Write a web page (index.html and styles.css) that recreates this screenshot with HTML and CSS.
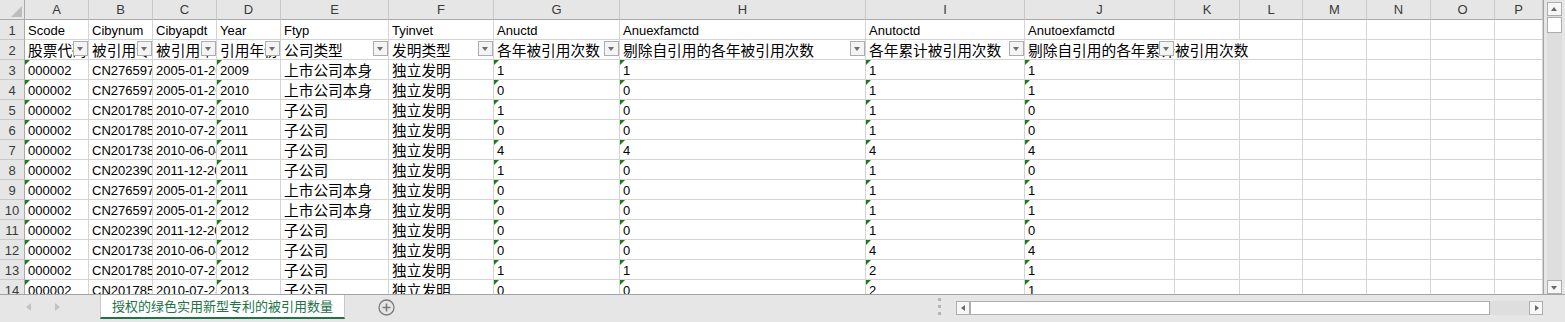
FILE: index.html
```html
<!DOCTYPE html>
<html lang="zh-CN">
<head>
    <meta charset="UTF-8">
    <title>授权的绿色实用新型专利的被引用数量</title>
    <link rel="stylesheet" href="styles.css">
</head>
<body>

    <div class="main">
        <div class="sheet">
            <div class="row hd">
                <div class="corner"><svg width="11" height="11" viewBox="0 0 11 11"><polygon points="11,0 11,11 0,11" fill="#bdbdbd"/></svg></div>
                <div class="h">A</div><div class="h">B</div><div class="h">C</div><div class="h">D</div>
                <div class="h">E</div><div class="h">F</div><div class="h">G</div><div class="h">H</div>
                <div class="h">I</div><div class="h">J</div><div class="h">K</div><div class="h">L</div>
                <div class="h">M</div><div class="h">N</div><div class="h">O</div><div class="h">P</div>
            </div>
            <div class="row">
                <div class="rh">1</div>
                <div class="c">Scode</div><div class="c">Cibynum</div><div class="c">Cibyapdt</div><div class="c">Year</div>
                <div class="c">Ftyp</div><div class="c">Tyinvet</div><div class="c">Anuctd</div><div class="c">Anuexfamctd</div>
                <div class="c">Anutoctd</div><div class="c">Anutoexfamctd</div>
                <div class="c"></div><div class="c"></div><div class="c"></div><div class="c"></div><div class="c"></div><div class="c"></div>
            </div>
            <div class="row">
                <div class="rh">2</div>
                <div class="c z">股票代码<span class="fb"></span></div>
                <div class="c z">被引用专利号<span class="fb"></span></div>
                <div class="c z">被引用申请日<span class="fb"></span></div>
                <div class="c z">引用年份<span class="fb"></span></div>
                <div class="c z">公司类型<span class="fb"></span></div>
                <div class="c z">发明类型<span class="fb"></span></div>
                <div class="c z">各年被引用次数<span class="fb"></span></div>
                <div class="c z">剔除自引用的各年被引用次数<span class="fb"></span></div>
                <div class="c z">各年累计被引用次数<span class="fb"></span></div>
                <div class="c z spill">剔除自引用的各年累计被引用次数<span class="fb"></span></div>
                <div class="c spill"></div>
                <div class="c"></div><div class="c"></div><div class="c"></div><div class="c"></div><div class="c"></div>
            </div>
            <div class="row">
                <div class="rh">3</div>
                <div class="c t">000002</div><div class="c">CN2765979</div><div class="c">2005-01-26</div><div class="c t">2009</div>
                <div class="c z">上市公司本身</div><div class="c z">独立发明</div>
                <div class="c t">1</div><div class="c t">1</div><div class="c t">1</div><div class="c t">1</div>
                <div class="c"></div><div class="c"></div><div class="c"></div><div class="c"></div><div class="c"></div><div class="c"></div>
            </div>
            <div class="row">
                <div class="rh">4</div>
                <div class="c t">000002</div><div class="c">CN2765979</div><div class="c">2005-01-26</div><div class="c t">2010</div>
                <div class="c z">上市公司本身</div><div class="c z">独立发明</div>
                <div class="c t">0</div><div class="c t">0</div><div class="c t">1</div><div class="c t">1</div>
                <div class="c"></div><div class="c"></div><div class="c"></div><div class="c"></div><div class="c"></div><div class="c"></div>
            </div>
            <div class="row">
                <div class="rh">5</div>
                <div class="c t">000002</div><div class="c">CN2017854</div><div class="c">2010-07-28</div><div class="c t">2010</div>
                <div class="c z">子公司</div><div class="c z">独立发明</div>
                <div class="c t">1</div><div class="c t">0</div><div class="c t">1</div><div class="c t">0</div>
                <div class="c"></div><div class="c"></div><div class="c"></div><div class="c"></div><div class="c"></div><div class="c"></div>
            </div>
            <div class="row">
                <div class="rh">6</div>
                <div class="c t">000002</div><div class="c">CN2017854</div><div class="c">2010-07-28</div><div class="c t">2011</div>
                <div class="c z">子公司</div><div class="c z">独立发明</div>
                <div class="c t">0</div><div class="c t">0</div><div class="c t">1</div><div class="c t">0</div>
                <div class="c"></div><div class="c"></div><div class="c"></div><div class="c"></div><div class="c"></div><div class="c"></div>
            </div>
            <div class="row">
                <div class="rh">7</div>
                <div class="c t">000002</div><div class="c">CN2017386</div><div class="c">2010-06-04</div><div class="c t">2011</div>
                <div class="c z">子公司</div><div class="c z">独立发明</div>
                <div class="c t">4</div><div class="c t">4</div><div class="c t">4</div><div class="c t">4</div>
                <div class="c"></div><div class="c"></div><div class="c"></div><div class="c"></div><div class="c"></div><div class="c"></div>
            </div>
            <div class="row">
                <div class="rh">8</div>
                <div class="c t">000002</div><div class="c">CN2023909</div><div class="c">2011-12-20</div><div class="c t">2011</div>
                <div class="c z">子公司</div><div class="c z">独立发明</div>
                <div class="c t">1</div><div class="c t">0</div><div class="c t">1</div><div class="c t">0</div>
                <div class="c"></div><div class="c"></div><div class="c"></div><div class="c"></div><div class="c"></div><div class="c"></div>
            </div>
            <div class="row">
                <div class="rh">9</div>
                <div class="c t">000002</div><div class="c">CN2765979</div><div class="c">2005-01-26</div><div class="c t">2011</div>
                <div class="c z">上市公司本身</div><div class="c z">独立发明</div>
                <div class="c t">0</div><div class="c t">0</div><div class="c t">1</div><div class="c t">1</div>
                <div class="c"></div><div class="c"></div><div class="c"></div><div class="c"></div><div class="c"></div><div class="c"></div>
            </div>
            <div class="row">
                <div class="rh">10</div>
                <div class="c t">000002</div><div class="c">CN2765979</div><div class="c">2005-01-26</div><div class="c t">2012</div>
                <div class="c z">上市公司本身</div><div class="c z">独立发明</div>
                <div class="c t">0</div><div class="c t">0</div><div class="c t">1</div><div class="c t">1</div>
                <div class="c"></div><div class="c"></div><div class="c"></div><div class="c"></div><div class="c"></div><div class="c"></div>
            </div>
            <div class="row">
                <div class="rh">11</div>
                <div class="c t">000002</div><div class="c">CN2023909</div><div class="c">2011-12-20</div><div class="c t">2012</div>
                <div class="c z">子公司</div><div class="c z">独立发明</div>
                <div class="c t">0</div><div class="c t">0</div><div class="c t">1</div><div class="c t">0</div>
                <div class="c"></div><div class="c"></div><div class="c"></div><div class="c"></div><div class="c"></div><div class="c"></div>
            </div>
            <div class="row">
                <div class="rh">12</div>
                <div class="c t">000002</div><div class="c">CN2017386</div><div class="c">2010-06-04</div><div class="c t">2012</div>
                <div class="c z">子公司</div><div class="c z">独立发明</div>
                <div class="c t">0</div><div class="c t">0</div><div class="c t">4</div><div class="c t">4</div>
                <div class="c"></div><div class="c"></div><div class="c"></div><div class="c"></div><div class="c"></div><div class="c"></div>
            </div>
            <div class="row">
                <div class="rh">13</div>
                <div class="c t">000002</div><div class="c">CN2017854</div><div class="c">2010-07-28</div><div class="c t">2012</div>
                <div class="c z">子公司</div><div class="c z">独立发明</div>
                <div class="c t">1</div><div class="c t">1</div><div class="c t">2</div><div class="c t">1</div>
                <div class="c"></div><div class="c"></div><div class="c"></div><div class="c"></div><div class="c"></div><div class="c"></div>
            </div>
            <div class="row">
                <div class="rh">14</div>
                <div class="c t">000002</div><div class="c">CN2017854</div><div class="c">2010-07-28</div><div class="c t">2013</div>
                <div class="c z">子公司</div><div class="c z">独立发明</div>
                <div class="c t">0</div><div class="c t">0</div><div class="c t">2</div><div class="c t">1</div>
                <div class="c"></div><div class="c"></div><div class="c"></div><div class="c"></div><div class="c"></div><div class="c"></div>
            </div>
        </div>

        <div class="vscroll">
            <div class="vbar">
                <div class="sbtn up"></div>
                <div class="vthumb"></div>
                <div class="vtrack"></div>
                <div class="sbtn down"></div>
            </div>
        </div>
    </div>

    <div class="tabbar">
        <div class="nav">
            <svg width="5" height="8" viewBox="0 0 5 8"><polygon points="5,0 5,8 0,4" fill="#c2c2c2"/></svg>
            <svg width="5" height="8" viewBox="0 0 5 8"><polygon points="0,0 0,8 5,4" fill="#c2c2c2"/></svg>
        </div>
        <div class="tab">授权的绿色实用新型专利的被引用数量</div>
        <div class="add">
            <svg width="17" height="17" viewBox="0 0 17 17">
                <circle cx="8.5" cy="8.5" r="7.5" fill="none" stroke="#7a7a7a" stroke-width="1.3"/>
                <path d="M8.5 4.5v8M4.5 8.5h8" stroke="#7a7a7a" stroke-width="1.6"/>
            </svg>
        </div>
        <div class="spacer"></div>
        <div class="dots"><i></i><i></i><i></i></div>
        <div class="hscroll">
            <div class="hbtn left"></div>
            <div class="hthumb"></div>
            <div class="htrack"></div>
            <div class="hbtn right"></div>
        </div>
    </div>

</body>
</html>
```

FILE: styles.css
```css
*{
    box-sizing: border-box;
}
html, body{
    margin: 0;
    padding: 0;
    width: 1565px;
    height: 322px;
    overflow: hidden;
}
body{
    font-family: 'Liberation Sans', Arial, sans-serif;
    font-size: 13px;
    color: #000;
    background-color: #e6e6e6;
}

.main{
    display: flex;
    height: 294px;
}

/* grid */
.sheet{
    width: 1544px;
    height: 294px;
    overflow: hidden;
    background: #fff;
    border-right: 1px solid #a3a3a3;
}
.row{
    display: grid;
    grid-template-columns: 25px 64px 64px 64px 64px 108px 105px 126px 246px 159px 150px 65px 63px 64px 64px 64px 48px;
    height: 20px;
}
.c{
    position: relative;
    padding: 2px 2px 0 3px;
    line-height: 17px;
    white-space: nowrap;
    overflow: hidden;
    border-right: 1px solid #d4d4d4;
    border-bottom: 1px solid #d4d4d4;
}
.c.z{
    font-family: 'Noto Sans CJK SC', sans-serif;
    font-size: 14.7px;
    padding-top: 1px;
}
.c.spill{
    overflow: visible;
    border-right-color: transparent;
}
.c.t::before{
    content: '';
    position: absolute;
    left: 0;
    top: 0;
    border-top: 5px solid #1a7d1a;
    border-right: 5px solid transparent;
}

/* filter button */
.fb{
    position: absolute;
    right: 0;
    top: 1px;
    width: 15px;
    height: 15px;
    background: #f4f4f4;
    border: 1px solid #adadad;
    z-index: 1;
}
.fb::after{
    content: '';
    position: absolute;
    left: 3px;
    top: 5px;
    border-top: 4px solid #6e6e6e;
    border-left: 3.5px solid transparent;
    border-right: 3.5px solid transparent;
}

/* headers */
.hd .h, .hd .corner{
    background: #e6e6e6;
    border-right: 1px solid #c9c9c9;
    border-bottom: 1px solid #a9a9a9;
    text-align: center;
    line-height: 19px;
    color: #3a3a3a;
}
.hd .corner{
    display: flex;
    align-items: flex-end;
    justify-content: flex-end;
    padding: 0 2px 2px 0;
    border-right-color: #a9a9a9;
}
.hd .corner svg{
    display: block;
}
.rh{
    background: #e6e6e6;
    border-right: 1px solid #a9a9a9;
    border-bottom: 1px solid #c9c9c9;
    text-align: center;
    padding-top: 2px;
    line-height: 17px;
    color: #3a3a3a;
}

/* vertical scrollbar */
.vscroll{
    width: 21px;
    padding: 2px 3px 0 3px;
}
.vbar{
    height: 100%;
    display: flex;
    flex-direction: column;
    background: #dedede;
}
.sbtn{
    position: relative;
    height: 14px;
    background: #f7f7f7;
    border: 1px solid #adadad;
}
.sbtn.up::after, .sbtn.down::after{
    content: '';
    position: absolute;
    left: 3px;
    top: 4px;
    border-left: 3.5px solid transparent;
    border-right: 3.5px solid transparent;
}
.sbtn.up::after{
    border-bottom: 4px solid #6a6a6a;
}
.sbtn.down::after{
    top: 5px;
    border-top: 4px solid #6a6a6a;
}
.vthumb{
    margin-top: 1px;
    height: 16px;
    background: #fff;
    border: 1px solid #adadad;
}
.vtrack{
    flex: 1;
}

/* sheet tabs */
.tabbar{
    display: flex;
    height: 28px;
    border-top: 1px solid #a3a3a3;
}
.nav{
    width: 100px;
    display: flex;
    align-items: center;
    gap: 24px;
    padding: 0 0 3px 26px;
}
.nav svg{
    display: block;
}
.tab{
    width: 245px;
    height: 24px;
    background: #fff;
    border-left: 1px solid #c9c9c9;
    border-right: 1px solid #c9c9c9;
    border-bottom: 2px solid #217346;
    color: #217346;
    font-family: 'Noto Sans CJK SC', sans-serif;
    font-size: 13px;
    line-height: 21px;
    text-align: center;
}
.add{
    margin: 4px 0 0 33px;
}
.add svg{
    display: block;
}
.spacer{
    flex: 1;
}
.dots{
    display: flex;
    flex-direction: column;
    gap: 4px;
    padding-top: 3px;
    margin-right: 15px;
}
.dots i{
    display: block;
    width: 3px;
    height: 3px;
    background: #b4b4b4;
}
.hscroll{
    width: 587px;
    height: 14px;
    margin: 6px 22px 0 0;
    display: flex;
    background: #dedede;
}
.hbtn{
    position: relative;
    width: 14px;
    background: #f7f7f7;
    border: 1px solid #adadad;
}
.hbtn::after{
    content: '';
    position: absolute;
    top: 3px;
    border-top: 3.5px solid transparent;
    border-bottom: 3.5px solid transparent;
}
.hbtn.left::after{
    left: 4px;
    border-right: 4px solid #6a6a6a;
}
.hbtn.right::after{
    left: 5px;
    border-left: 4px solid #6a6a6a;
}
.hthumb{
    width: 520px;
    background: #fff;
    border: 1px solid #adadad;
}
.htrack{
    flex: 1;
}
```
